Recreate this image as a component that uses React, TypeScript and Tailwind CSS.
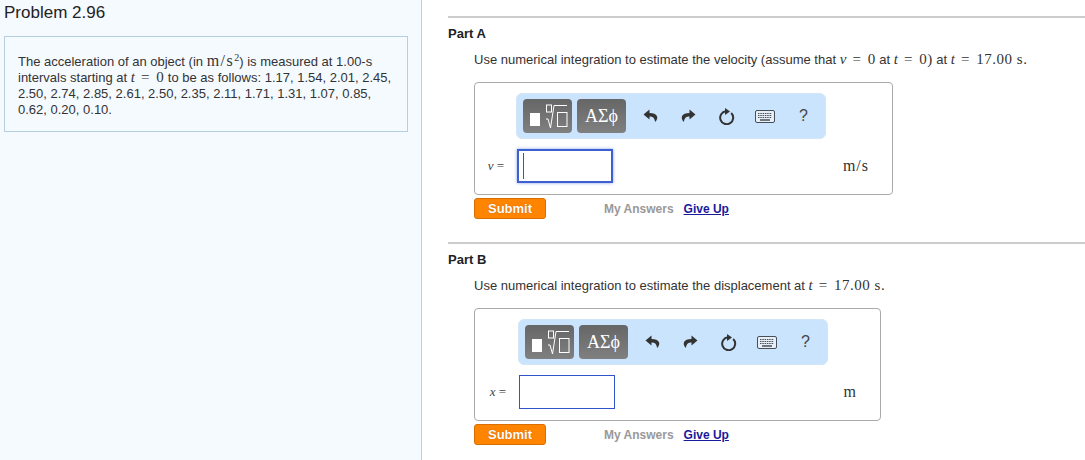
import React from "react";

const M = ({ children, i }: { children: React.ReactNode; i?: boolean }) => (
  <span className={`font-['Liberation_Serif',serif] text-[15px] leading-[1] tracking-[0.5px] ${i ? "italic" : ""}`}>{children}</span>
);

const Eq = ({ children }: { children: React.ReactNode }) => (
  <span className="font-['Liberation_Serif',serif] text-[15px] leading-[1] tracking-[0.5px]">
    <span className="mx-[2px]">=</span> {children}
  </span>
);

const TemplateIcon = () => (
  <svg width="49" height="34" viewBox="0 0 49 34" className="block">
    <rect x="7" y="14" width="10" height="13" fill="#fff" />
    <rect x="23.5" y="6" width="5" height="7" fill="none" stroke="#fff" strokeWidth="1" />
    <path d="M23 20l2 0 2.5 9L31 6.5h13" fill="none" stroke="#fff" strokeWidth="1" />
    <rect x="34.5" y="13.5" width="9.5" height="14" fill="none" stroke="#fff" strokeWidth="1" />
  </svg>
);

const Undo = ({ flip }: { flip?: boolean }) => (
  <svg width="15" height="16" viewBox="0 0 15 16" className={flip ? "-scale-x-100" : ""}>
    <path d="M6.5 1.5 0.5 6.5l6 5V8.6c3 0 5 .9 5.6 5.4 2.2-2.2 2.6-4.2 1.800-6-1-2-3.400-3-7.400-3z" fill="#333" />
  </svg>
);

const Redo = () => (
  <svg width="17" height="17" viewBox="0 0 17 17" fill="none">
    <path d="M13.200 5A6.500 6.500 0 1 1 8 3.200" stroke="#333" strokeWidth="2" />
    <path d="M7 0l5 3.500-5 3.500z" fill="#333" />
  </svg>
);

const Keyboard = () => (
  <svg width="20" height="13" viewBox="0 0 20 13">
    <rect x="0.500" y="0.500" width="19" height="12" rx="1.500" fill="#e8eef4" stroke="#44505c" />
    <path d="M3 3.500h14M3 5.500h14M3 7.500h14" stroke="#44505c" strokeDasharray="1.500 .8" />
    <path d="M5 10h10" stroke="#44505c" strokeWidth="1.500" />
  </svg>
);

const Toolbar = () => (
  <div className="flex h-[46px] w-[310px] items-center rounded-[6px] border border-[#d4e6f5] bg-[#c9e4fc] pl-[6px]">
    <div className="h-[34px] w-[49px] rounded-[4px] bg-gradient-to-b from-[#666] to-[#808080]">
      <TemplateIcon />
    </div>
    <div className="ml-[5px] flex h-[34px] w-[49px] items-center justify-center rounded-[4px] bg-gradient-to-b from-[#666] to-[#808080] font-['Liberation_Serif',serif] text-[18px] text-white">
      ΑΣϕ
    </div>
    <div className="ml-[17px] flex w-[15px] justify-center"><Undo /></div>
    <div className="ml-[23px] flex w-[15px] justify-center"><Undo flip /></div>
    <div className="ml-[22px] flex w-[17px] justify-center"><Redo /></div>
    <div className="ml-[20px] flex w-[20px] justify-center"><Keyboard /></div>
    <div className="ml-[24px] font-['Liberation_Sans',sans-serif] text-[16px] leading-none text-[#444]">?</div>
  </div>
);

const Part = ({
  title,
  description,
  boxWidth,
  varName,
  unit,
  focused,
  indent,
  labelWidth,
  unitRight,
}: {
  title: string;
  description: React.ReactNode;
  boxWidth: string;
  varName: string;
  unit: string;
  focused?: boolean;
  indent: string;
  labelWidth: string;
  unitRight: string;
}) => (
  <section className="border-t-2 border-[#ccc]">
    <h2 className="mt-[8px] text-[13px] font-bold leading-[15px] text-[#222]">{title}</h2>
    <div className="pl-[26px]">
      <p className="mt-[11px] h-[16px] whitespace-nowrap text-[13px] leading-[16px] text-[#333]">{description}</p>
      <div className={`mt-[14px] h-[113px] rounded-[4px] border border-[#aaa] bg-white pt-[10px] ${boxWidth}`}>
        <div className={indent}>
          <Toolbar />
        </div>
        <div className="mt-[10px] flex items-center">
          <span className={`pr-[13px] text-right font-['Liberation_Serif',serif] text-[13px] text-[#444] ${labelWidth}`}>
            <i>{varName}</i> =
          </span>
          <div
            className={`flex h-[34px] w-[96px] items-center bg-white pl-[4px] ${
              focused ? "border-2 border-[#3e5fd0] shadow-[0_0_3px_#7f9fe8]" : "border border-[#2f55c9]"
            }`}
          >
            {focused && <div className="h-[26px] w-px bg-[#2f55c9]" />}
          </div>
          <span className={`ml-auto font-['Liberation_Serif',serif] text-[16px] tracking-[1px] text-[#333] ${unitRight}`}>{unit}</span>
        </div>
      </div>
      <div className="mt-[3px] flex h-[21px] items-center">
        <button className="h-[21px] w-[72px] rounded-[3px] border border-[#d96f00] bg-[#ff8400] text-[13px] font-bold leading-none text-white [text-shadow:0_0_1px_#a85500]">
          Submit
        </button>
        <span className="ml-[58px] text-[12px] font-bold text-[#999]">My Answers</span>
        <a className="ml-[10px] text-[12px] font-bold text-[#1a1a9c] underline">Give Up</a>
      </div>
    </div>
  </section>
);

export default function App() {
  return (
    <div className="flex h-[460px] w-[1085px] overflow-hidden bg-white font-['Liberation_Sans',sans-serif]">
      <aside className="h-full w-[422px] shrink-0 border-r border-[#c0d0e0] bg-[#f5faff]">
        <h1 className="ml-[4px] mt-[4px] text-[17px] leading-[18px] text-[#222]">Problem 2.96</h1>
        <div className="ml-[4px] mt-[14px] h-[96px] w-[404px] border border-[#b5cfe0] pl-[13px] pt-[16px] text-[13px] leading-[16px] text-[#333]">
          <p>
            The acceleration of an object (in{" "}
            <span className="font-['Liberation_Serif',serif] text-[16px] leading-[1] tracking-[1.5px]">m/s</span>
            <sup className="font-['Liberation_Serif',serif] text-[10px] leading-[0]">2</sup>) is measured at 1.00-s
            <br />
            intervals starting at <M i>t</M> <Eq>0</Eq> to be as follows: 1.17, 1.54, 2.01, 2.45,
            <br />
            2.50, 2.74, 2.85, 2.61, 2.50, 2.35, 2.11, 1.71, 1.31, 1.07, 0.85,
            <br />
            0.62, 0.20, 0.10.
          </p>
        </div>
      </aside>
      <main className="flex-1 pl-[26px] pt-[16px]">
        <Part
          title="Part A"
          boxWidth="w-[419px]"
          varName="v"
          unit="m/s"
          focused
          indent="ml-[41px]"
          labelWidth="w-[42px]"
          unitRight="mr-[23px]"
          description={
            <>
              Use numerical integration to estimate the velocity (assume that <M i>v</M> <Eq>0</Eq> at <M i>t</M>{" "}
              <Eq>0)</Eq> at <M i>t</M> <Eq>17.00 s.</Eq>
            </>
          }
        />
        <div className="h-[23px]" />
        <Part
          title="Part B"
          boxWidth="w-[407px]"
          varName="x"
          unit="m"
          indent="ml-[43px]"
          labelWidth="w-[44px]"
          unitRight="mr-[23px]"
          description={
            <>
              Use numerical integration to estimate the displacement at <M i>t</M> <Eq>17.00 s.</Eq>
            </>
          }
        />
      </main>
    </div>
  );
}
